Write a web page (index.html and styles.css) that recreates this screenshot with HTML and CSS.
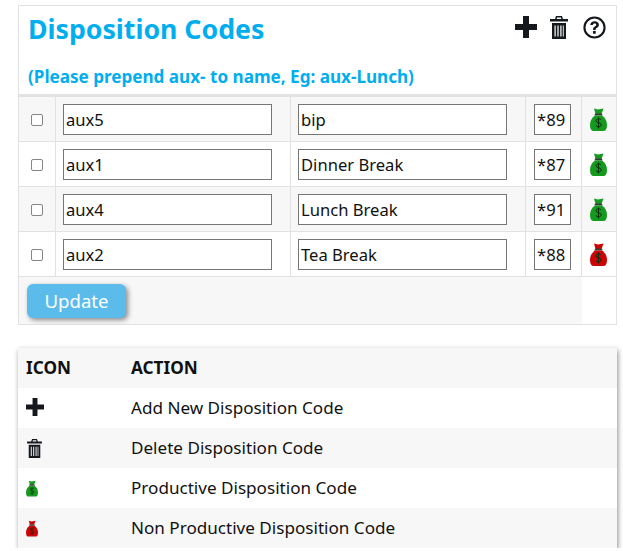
FILE: index.html
```html
<!DOCTYPE html>
<html lang="en">
<head>
    <meta charset="UTF-8">
    <meta name="viewport" content="width=device-width, initial-scale=1.0">
    <title>Disposition Codes</title>
    <link rel="stylesheet" href="styles.css">
</head>
<body>
    <svg class="icon-defs" width="0" height="0">
        <symbol id="plus" viewBox="0 0 22 22">
            <path d="M8 0h6v8h8v6h-8v8H8v-8H0V8h8z"/>
        </symbol>
        <symbol id="trash" viewBox="0 0 18 23">
            <path d="M6 0h6l1 3h5v2.500H0V3h5zM7 1.500 6.700 3h4.600L11 1.500z"/>
            <path d="M2 7h14v16H2zM4.500 9.500v11h1.200v-11zM7.400 9.500v11h1.200v-11zM10.300 9.500v11h1.200v-11zM12.800 9.500v11h.9v-11z" fill-rule="evenodd"/>
        </symbol>
        <symbol id="help" viewBox="0 0 24 24">
            <circle cx="12" cy="12" r="10.500" fill="none" stroke="currentColor" stroke-width="2.200"/>
            <path d="M7.500 9.500C7.700 6.800 9.600 5.500 12.100 5.500c2.600 0 4.500 1.400 4.500 3.700 0 1.900-1.100 2.700-2.300 3.400-.9.500-1.100.9-1.100 1.900h-2.700c0-1.800.4-2.600 1.800-3.500 1-.6 1.500-1 1.500-1.800 0-.8-.7-1.300-1.700-1.300-1.100 0-1.800.6-1.900 1.600z"/>
            <rect x="10.400" y="15.600" width="2.900" height="2.900"/>
        </symbol>
        <symbol id="bag" viewBox="0 0 17 23">
            <path d="M4 0.500 8 1.500 13.500 0.500 11.500 6H5.500z" fill="currentColor"/>
            <path d="M5 5.500h7l.5 2h-8z" fill="#3a3a3a"/>
            <path d="M5 7.500h7C15 9.500 17 13 17 17c0 4-1.500 6-3.500 6h-10C1.500 23 0 21 0 17c0-4 2-7.500 5-9.500z" fill="currentColor"/>
            <path d="M11 12c-.6-.9-1.500-1.200-2.500-1.200-1.400 0-2.500.7-2.500 1.900 0 2.700 5.200 1.400 5.200 4.100 0 1.200-1.200 2-2.700 2-1.100 0-2-.4-2.600-1.300M8.500 9.500v11" fill="none" stroke="#0c2c0e" stroke-width="1"/>
        </symbol>
    </svg>

    <div class="codes-box">
        <div class="codes-head">
            <div class="title-row">
                <h2>Disposition Codes</h2>
                <div class="head-icons">
                    <svg class="icon-plus"><use href="#plus"/></svg>
                    <svg class="icon-trash"><use href="#trash"/></svg>
                    <svg class="icon-help"><use href="#help"/></svg>
                </div>
            </div>
            <p class="hint">(Please prepend aux- to name, Eg: aux-Lunch)</p>
        </div>
        <table class="codes-table">
            <tr class="shaded">
                <td class="col-check"><input type="checkbox"></td>
                <td class="col-text"><input type="text" value="aux5"></td>
                <td class="col-text"><input type="text" value="bip"></td>
                <td class="col-ext"><input type="text" value="*89"></td>
                <td class="col-bag"><svg class="bag green"><use href="#bag"/></svg></td>
            </tr>
            <tr>
                <td class="col-check"><input type="checkbox"></td>
                <td class="col-text"><input type="text" value="aux1"></td>
                <td class="col-text"><input type="text" value="Dinner Break"></td>
                <td class="col-ext"><input type="text" value="*87"></td>
                <td class="col-bag"><svg class="bag green"><use href="#bag"/></svg></td>
            </tr>
            <tr class="shaded">
                <td class="col-check"><input type="checkbox"></td>
                <td class="col-text"><input type="text" value="aux4"></td>
                <td class="col-text"><input type="text" value="Lunch Break"></td>
                <td class="col-ext"><input type="text" value="*91"></td>
                <td class="col-bag"><svg class="bag green"><use href="#bag"/></svg></td>
            </tr>
            <tr>
                <td class="col-check"><input type="checkbox"></td>
                <td class="col-text"><input type="text" value="aux2"></td>
                <td class="col-text"><input type="text" value="Tea Break"></td>
                <td class="col-ext"><input type="text" value="*88"></td>
                <td class="col-bag"><svg class="bag red"><use href="#bag"/></svg></td>
            </tr>
            <tr>
                <td class="update-cell" colspan="4"><button>Update</button></td>
                <td class="empty-cell"></td>
            </tr>
        </table>
    </div>

    <table class="legend">
        <tr class="legend-head">
            <th class="legend-icon">ICON</th>
            <th>ACTION</th>
        </tr>
        <tr>
            <td class="legend-icon"><svg class="small-plus"><use href="#plus"/></svg></td>
            <td>Add New Disposition Code</td>
        </tr>
        <tr class="shaded">
            <td class="legend-icon"><svg class="small-trash"><use href="#trash"/></svg></td>
            <td>Delete Disposition Code</td>
        </tr>
        <tr>
            <td class="legend-icon"><svg class="small-bag green"><use href="#bag"/></svg></td>
            <td>Productive Disposition Code</td>
        </tr>
        <tr class="shaded">
            <td class="legend-icon"><svg class="small-bag red"><use href="#bag"/></svg></td>
            <td>Non Productive Disposition Code</td>
        </tr>
    </table>
</body>
</html>
```

FILE: styles.css
```css
body {
    font-family: 'Noto Sans', 'Open Sans', sans-serif;
    color: #111;
    background: #fff;
    margin: 0;
    padding: 5px 6px 0 18px;
}

svg {
    display: block;
    fill: #15191e;
    color: #15191e;
}

.icon-defs {
    position: absolute;
}

.codes-box {
    border: 1px solid #e2e2e2;
}

.codes-head {
    padding: 0 10px 0 9px;
    height: 88px;
}

.title-row {
    display: flex;
    justify-content: space-between;
    padding-top: 6px;
}

h2 {
    margin: 0;
    color: #00aeef;
    font-size: 26.7px;
    line-height: 34px;
    font-weight: bold;
}

.head-icons {
    display: flex;
    align-items: flex-start;
    gap: 13px;
    padding-top: 4px;
}

.icon-plus { width: 22px; height: 22px; }
.icon-trash { width: 18px; height: 23px; }
.icon-help { width: 23px; height: 23px; margin-left: 2px; }

.hint {
    margin: 20px 0 0;
    color: #00aeef;
    font-size: 17.1px;
    line-height: 22px;
    font-weight: bold;
}

.codes-table {
    width: 100%;
    border-collapse: collapse;
    table-layout: fixed;
    border-top: 3px solid #e2e2e2;
}

.codes-table td {
    border: 1px solid #e2e2e2;
    padding: 0 7px;
    height: 44px;
}

.codes-table tr:first-child td { border-top: none; }
.codes-table td:first-child { border-left: none; }
.codes-table td:last-child { border-right: none; }
.codes-table tr:last-child td { border-bottom: none; }

.col-check { width: 22px; }
.col-text { width: auto; }
.codes-table .col-ext { width: 40px; padding-left: 8px; }
.col-bag { width: 20px; }

input[type="checkbox"] {
    display: block;
    appearance: none;
    box-sizing: border-box;
    margin: 1px 0 0 5px;
    width: 12px;
    height: 12px;
    background: #fff;
    border: 1px solid #858585;
    border-radius: 2px;
}

input[type="text"] {
    display: block;
    box-sizing: border-box;
    width: 209px;
    height: 31px;
    padding: 1px 2px 0 2px;
    border: 1px solid #767676;
    font-family: 'Noto Sans', 'Open Sans', sans-serif;
    font-size: 16.6px;
    color: #111;
}

.col-ext input[type="text"] {
    width: 37px;
    padding-left: 2px;
}

.shaded {
    background: #f7f7f7;
}

.bag {
    width: 17px;
    height: 23px;
    margin-left: 1px;
}

.green { color: #149a1d; }
.red { color: #cc0404; }

.codes-table .update-cell {
    background: #f7f7f7;
    height: 40px;
    padding: 7px 8px 0;
    vertical-align: top;
    border-right: none;
}

.codes-table .empty-cell {
    border-left: none;
}

button {
    display: block;
    width: 99px;
    height: 34px;
    padding: 0 0 2px;
    background: #5bbcec;
    color: #fff;
    border: none;
    border-radius: 6px;
    box-shadow: 2px 2px 5px rgba(0, 0, 0, 0.45);
    font-family: 'Noto Sans', 'Open Sans', sans-serif;
    font-size: 18.6px;
}

.legend {
    width: 599px;
    margin-top: 23px;
    border-collapse: collapse;
    box-shadow: 1px 2px 5px rgba(0, 0, 0, 0.45);
    font-size: 17.1px;
}

.legend th,
.legend td {
    height: 38px;
    padding: 0 0 2px;
    text-align: left;
}

.legend-head {
    background: #f7f7f7;
    font-size: 17.2px;
}

.legend .legend-icon {
    width: 105px;
    padding-left: 8px;
}

.small-plus { width: 18px; height: 18px; }
.small-trash { width: 15px; height: 19px; margin: 0 0 -2px 1px; }
.small-bag { width: 12px; height: 17px; margin-bottom: -2px; }
```
